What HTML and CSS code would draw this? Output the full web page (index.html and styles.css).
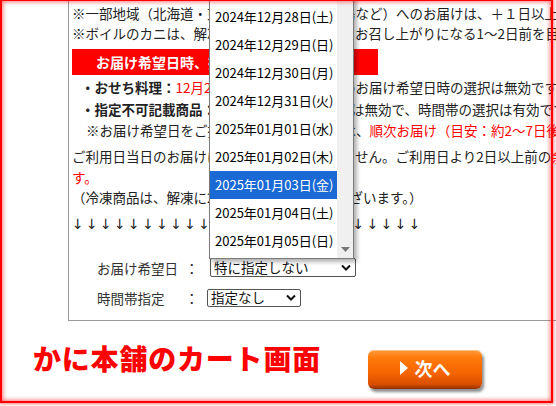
FILE: index.html
```html
<!DOCTYPE html>
<html lang="ja">
<head>
    <meta charset="UTF-8">
    <meta name="viewport" content="width=device-width, initial-scale=1.0">
    <title>かに本舗のカート画面</title>
    <link rel="stylesheet" href="styles.css">
</head>
<body>
    <div class="box">
        <p class="note">※一部地域（北海道・東北・九州・沖縄・離島など）へのお届けは、＋１日以上のお日にちを頂戴しております。</p>
        <p class="note">※ボイルのカニは、解凍時間が必要ですので、お召し上がりになる1～2日前を目安にご指定ください。</p>

        <div class="banner">お届け希望日時、指定について</div>

        <ul class="rules">
            <li><b>・おせち料理：</b><span class="red">12月29日～31日お届け</span>のためお届け希望日時の選択は無効です。</li>
            <li><b>・指定不可記載商品：</b>お届け希望日時の選択は無効で、時間帯の選択は有効です。</li>
            <li class="sub">※お届け希望日をご指定されなかった場合は、<span class="red">順次お届け（目安：約2～7日後）</span></li>
        </ul>

        <p class="para">ご利用日当日のお届けは、ご指定をいただけません。ご利用日より2日以上前の<span class="red">余裕をもったお日にちをご指定くださいま</span><br><span class="red">す。</span></p>
        <p class="para small">（冷凍商品は、解凍に2日ほどかかる場合がございます。）</p>

        <p class="arrows">↓↓↓↓↓↓↓↓↓↓↓↓↓↓↓↓↓↓↓↓↓↓↓↓↓</p>

        <div class="form-row first">
            <span class="label">お届け希望日</span><span class="colon">：</span>
            <div class="select wide">特に指定しない
                <svg width="10" height="7" viewBox="0 0 10 7"><path d="M1 1.5 L5 5.5 L9 1.5" fill="none" stroke="#111" stroke-width="2"/></svg>
            </div>
        </div>
        <div class="form-row second">
            <span class="label">時間帯指定</span><span class="colon">：</span>
            <div class="select narrow">指定なし
                <svg width="10" height="7" viewBox="0 0 10 7"><path d="M1 1.5 L5 5.5 L9 1.5" fill="none" stroke="#111" stroke-width="2"/></svg>
            </div>
        </div>

        <!-- opened list of the delivery date select -->
        <div class="dropdown">
            <ul class="options">
                <li>2024年12月27日(金)</li>
                <li>2024年12月28日(土)</li>
                <li>2024年12月29日(日)</li>
                <li>2024年12月30日(月)</li>
                <li>2024年12月31日(火)</li>
                <li>2025年01月01日(水)</li>
                <li>2025年01月02日(木)</li>
                <li class="selected">2025年01月03日(金)</li>
                <li>2025年01月04日(土)</li>
                <li>2025年01月05日(日)</li>
            </ul>
            <div class="scrollbar">
                <svg width="9" height="5" viewBox="0 0 9 5"><path d="M0 0 L9 0 L4.5 5 Z" fill="#777"/></svg>
            </div>
        </div>
    </div>

    <div class="footer">
        <h1 class="title">かに本舗のカート画面</h1>
        <button type="button" class="next-btn"><span class="tri"></span>次へ</button>
    </div>

    <div class="frame"></div>
</body>
</html>
```

FILE: styles.css
```css
body {
    margin: 0;
    width: 556px;
    height: 406px;
    overflow: hidden;
    font-family: "Noto Sans CJK JP", sans-serif;
    color: #222;
    background: #fff;
    position: relative;
}
.red {
    color: #ff0000;
}
.box {
    position: relative;
    margin-left: 68px;
    width: 640px;
    border-left: 1px solid #9a9a9a;
    border-bottom: 1px solid #9a9a9a;
    padding: 3px 0 12px 3px;
    font-size: 13.5px;
}
.note {
    margin: 0;
    line-height: 20px;
    white-space: nowrap;
}
.banner {
    margin-top: 6px;
    width: 306px;
    height: 26px;
    box-sizing: border-box;
    padding-left: 24px;
    background: #ff0000;
    color: #fff;
    font-weight: bold;
    font-size: 14px;
    line-height: 26px;
    white-space: nowrap;
    overflow: hidden;
}
.rules {
    list-style: none;
    margin: 2px 0 0;
    padding: 0 0 0 9px;
}
.rules li {
    line-height: 21.5px;
    white-space: nowrap;
}
.rules li.sub {
    padding-left: 5px;
}
.para {
    margin: 4px 0 0;
    line-height: 21px;
    white-space: nowrap;
}
.para.small {
    margin-top: 0;
    line-height: 19px;
}
.arrows {
    margin: 7px 0 0;
    line-height: 20px;
    font-family: "DejaVu Sans", sans-serif;
    font-size: 14px;
    letter-spacing: 2.3px;
    color: #222;
    white-space: nowrap;
}
.form-row {
    display: flex;
    align-items: center;
    padding-left: 25px;
}
.form-row.first {
    margin-top: 24px;
}
.form-row.second {
    margin-top: 10px;
}
.label {
    width: 88px;
    color: #333;
}
.colon {
    width: 25px;
}
.second .colon {
    width: 22px;
}
.select {
    display: flex;
    align-items: center;
    justify-content: space-between;
    height: 19px;
    box-sizing: border-box;
    padding: 0 4px 0 3px;
    border: 1px solid #555;
    border-radius: 2px;
    font-size: 13.5px;
    line-height: 17px;
    color: #111;
    background: #fff;
}
.select.wide {
    width: 146px;
}
.select.narrow {
    width: 94px;
    height: 18px;
}
.dropdown {
    position: absolute;
    left: 140px;
    top: -26px;
    width: 145px;
    height: 285px;
    box-sizing: border-box;
    border: 1px solid #7a7a7a;
    background: #fff;
    box-shadow: 3px 3px 4px rgba(0, 0, 0, 0.3);
    display: flex;
    overflow: hidden;
}
.options {
    list-style: none;
    margin: 0;
    padding: 0;
    flex: 1;
}
.options li {
    height: 28px;
    line-height: 28px;
    padding-left: 5px;
    font-size: 13px;
    color: #000;
    white-space: nowrap;
}
.options li.selected {
    background: #1a69d4;
    color: #fff;
}
.scrollbar {
    width: 16px;
    background: #f0f0f0;
    display: flex;
    align-items: flex-end;
    justify-content: center;
    padding-bottom: 6px;
    box-sizing: border-box;
}
.footer {
    display: flex;
    align-items: flex-start;
    padding: 23px 0 0 33px;
}
.title {
    margin: 0;
    font-size: 28px;
    line-height: 28px;
    letter-spacing: 0.8px;
    font-weight: 900;
    color: #ff0000;
    white-space: nowrap;
}
.next-btn {
    margin: 6px 0 0 47px;
    width: 114px;
    height: 39px;
    border: none;
    border-radius: 6px;
    background: linear-gradient(#ff9a3a 0%, #ff7a0a 20%, #f56400 60%, #d94e00 88%, #8f3000 100%);
    box-shadow: inset 0 1px 0 #ffc080, 2px 3px 3px rgba(0, 0, 0, 0.45);
    color: #fff;
    font-family: "Noto Sans CJK JP", sans-serif;
    font-weight: bold;
    font-size: 18px;
    display: flex;
    align-items: center;
    justify-content: center;
    padding: 0 0 2px;
}
.tri {
    width: 0;
    height: 0;
    border-top: 7px solid transparent;
    border-bottom: 7px solid transparent;
    border-left: 8px solid #fff;
    margin-right: 7px;
}
.frame {
    position: absolute;
    left: 0;
    top: -1px;
    width: 553px;
    height: 404px;
    box-sizing: border-box;
    border: 2px solid #ff0000;
    box-shadow: inset 0 0 4px 1px rgba(255, 0, 0, 0.55), 0 0 3px 1px rgba(255, 0, 0, 0.5);
    pointer-events: none;
}
```
